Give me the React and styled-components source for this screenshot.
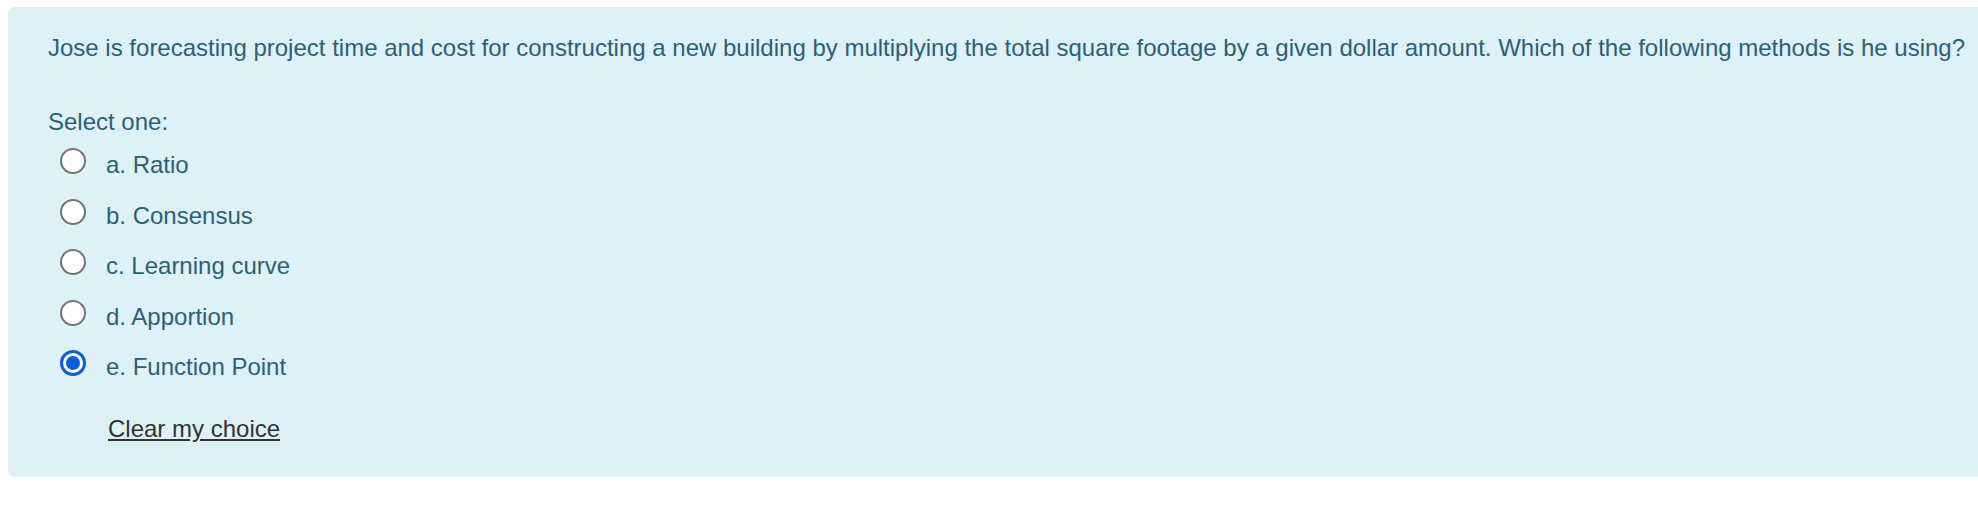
import React from 'react';
import styled, { createGlobalStyle } from 'styled-components';

const GlobalStyle = createGlobalStyle`
  html, body {
    margin: 0;
    padding: 0;
    background: #fff;
    overflow: hidden;
  }
`;

const Page = styled.div`
  padding: 7px 0 0 8px;
  font-family: "Liberation Sans", Arial, sans-serif;
`;

const Formulation = styled.div`
  width: 2100px;
  box-sizing: border-box;
  background: #def1f7;
  color: #2a6274;
  border-radius: 7px;
  padding: 23px 40px 30px 40px;
  font-size: 24px;
  line-height: 36px;
`;

const QText = styled.div`
  white-space: nowrap;
  margin-bottom: 38px;
`;

const Prompt = styled.div`
  margin-bottom: 7px;
`;

const Options = styled.div`
  display: flex;
  flex-direction: column;
  gap: 14.5px;
`;

const Option = styled.label`
  display: flex;
  align-items: flex-start;
  gap: 20px;
  padding-left: 12px;
  cursor: pointer;
`;

const Radio = styled.span`
  width: 26px;
  height: 26px;
  margin-top: 1px;
  box-sizing: border-box;
  border-radius: 50%;
  background: #fff;
  border: ${(p) => (p.$checked ? '3px solid #0b5ed7' : '2px solid #737373')};
  display: flex;
  align-items: center;
  justify-content: center;
  flex-shrink: 0;
  &::after {
    content: '';
    display: ${(p) => (p.$checked ? 'block' : 'none')};
    width: 14px;
    height: 14px;
    border-radius: 50%;
    background: #0b5ed7;
  }
`;

const ClearLink = styled.a`
  display: inline-block;
  margin: 26px 0 0 60px;
  color: #333;
  text-decoration: underline;
  cursor: pointer;
`;

const options = [
  { id: 'a', label: 'a. Ratio' },
  { id: 'b', label: 'b. Consensus' },
  { id: 'c', label: 'c. Learning curve' },
  { id: 'd', label: 'd. Apportion' },
  { id: 'e', label: 'e. Function Point' },
];

const App = () => {
  const selected = 'e';
  return (
    <Page>
      <GlobalStyle />
      <Formulation>
        <QText>
          Jose is forecasting project time and cost for constructing a new building by multiplying the total square footage by a given dollar amount. Which of the following methods is he using?
        </QText>
        <Prompt>Select one:</Prompt>
        <Options>
          {options.map((o) => (
            <Option key={o.id}>
              <Radio $checked={o.id === selected} />
              <span>{o.label}</span>
            </Option>
          ))}
        </Options>
        <ClearLink>Clear my choice</ClearLink>
      </Formulation>
    </Page>
  );
};

export default App;
